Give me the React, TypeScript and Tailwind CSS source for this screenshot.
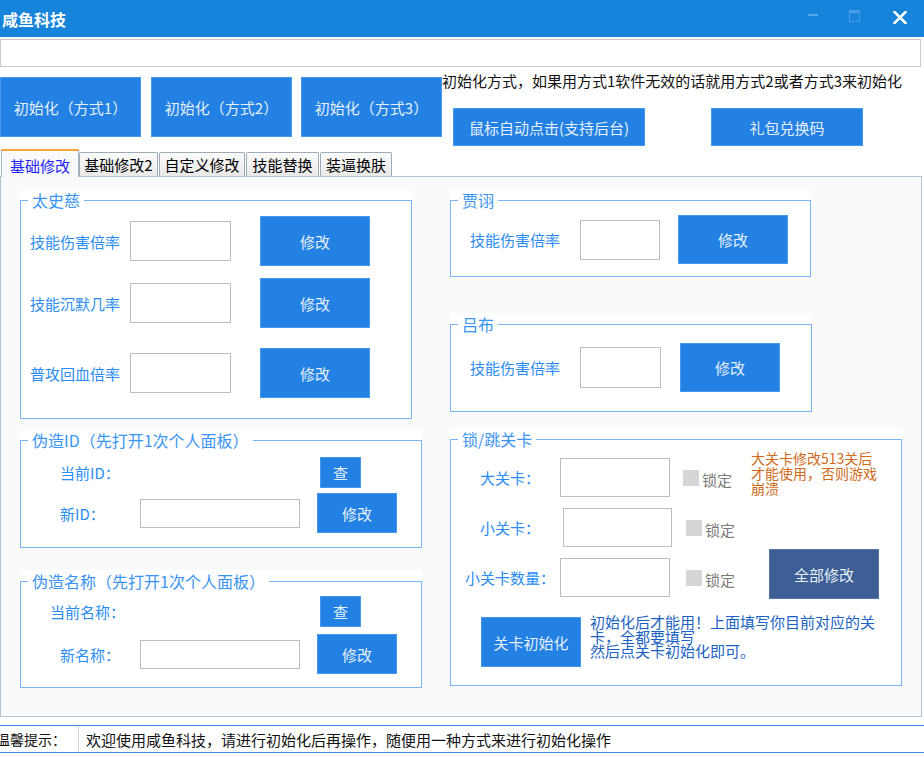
import React from "react";

const Btn = ({ className = "", children }: { className?: string; children: React.ReactNode }) => (
  <div
    className={`flex shrink-0 items-center justify-center border border-[#4399ee] bg-[#2381e3] text-[15px] leading-none text-[#e6effb] ${className}`}
  >
    {children}
  </div>
);

const Input = ({ className = "" }: { className?: string }) => (
  <div className={`shrink-0 border border-[#bdbdbd] bg-white ${className}`} />
);

const Group = ({
  title,
  className = "",
  boxClass = "",
  children,
}: {
  title: string;
  className?: string;
  boxClass?: string;
  children?: React.ReactNode;
}) => (
  <div className={`relative bg-white pt-[11px] ${className}`}>
    <div className={`border border-[#7ab4f8] ${boxClass}`}>{children}</div>
    <div className="absolute left-[8px] top-0 whitespace-nowrap bg-white px-[4px] text-[16px] leading-[22px] text-[#3a94f3]">
      {title}
    </div>
  </div>
);

const Lbl = ({ className = "", children }: { className?: string; children: React.ReactNode }) => (
  <div className={`shrink-0 whitespace-nowrap text-[15px] leading-none text-[#2a8cf4] ${className}`}>{children}</div>
);

const Lock = ({ className = "" }: { className?: string }) => (
  <div className={`flex items-center ${className}`}>
    <div className="h-[16px] w-[16px] bg-[#d6d6d6]" />
    <div className="ml-[3px] mt-[4px] text-[15px] leading-none text-[#7a7a7a]">锁定</div>
  </div>
);

export default function App() {
  return (
    <div className="flex h-[757px] w-[924px] flex-col overflow-hidden bg-white font-['Noto_Sans_CJK_SC','Noto_Sans',sans-serif] text-black">
      {/* title bar */}
      <div className="flex h-[37px] shrink-0 items-center bg-[#1784dc]">
        <div className="ml-[2px] text-[16px] font-bold leading-none text-white">咸鱼科技</div>
        <div className="ml-auto flex items-center">
          <div className="mr-[31px] mt-[-8px] h-[2px] w-[10px] bg-[#5aa6ea]" />
          <div className="mr-[33px] mt-[-6px] h-[12px] w-[11px] border border-t-[3px] border-[#4d9ce6]" />
          <svg width="14" height="13" viewBox="0 0 14 13" className="mr-[17px] mt-[-2px]">
            <path d="M1.5 1 L12.5 12 M12.5 1 L1.5 12" stroke="white" strokeWidth="2.6" strokeLinecap="square" />
          </svg>
        </div>
      </div>

      {/* address input */}
      <div className="mt-[2px] h-[28px] w-[921px] shrink-0 border border-[#cbcbcb] bg-white" />

      {/* top buttons */}
      <div className="flex h-[81px] shrink-0">
        <div className="flex pt-[10px]">
          <Btn className="h-[60px] w-[141px]">初始化（方式1）</Btn>
          <Btn className="ml-[10px] h-[60px] w-[141px]">初始化（方式2）</Btn>
          <Btn className="ml-[9px] h-[60px] w-[141px]">初始化（方式3）</Btn>
        </div>
        <div className="flex flex-col">
          <div className="mt-[4px] whitespace-nowrap text-[15px] leading-[20px] text-[#111]">
            初始化方式，如果用方式1软件无效的话就用方式2或者方式3来初始化
          </div>
          <div className="mt-[17px] flex">
            <Btn className="ml-[11px] h-[38px] w-[192px]">鼠标自动点击(支持后台)</Btn>
            <Btn className="ml-[66px] h-[38px] w-[152px]">礼包兑换码</Btn>
          </div>
        </div>
      </div>

      {/* tabs */}
      <div className="relative z-10 flex h-[28px] shrink-0 items-end pl-[1px]">
        <div className="-mb-px flex h-[28px] w-[78px] items-center justify-center border-x border-t-2 border-x-[#a9b6c4] border-t-[#f3a43a] bg-[#f9fafc] pt-[2px] text-[15px] leading-none text-[#2323f5]">
          基础修改
        </div>
        <div className="flex h-[24px] w-[79px] items-center justify-center rounded-t-[2px] border border-b-0 border-[#9eacba] bg-gradient-to-b from-[#fbfbfb] to-[#e9e9e9] text-[15px] leading-none">
          基础修改2
        </div>
        <div className="ml-px flex h-[24px] w-[86px] items-center justify-center rounded-t-[2px] border border-b-0 border-[#9eacba] bg-gradient-to-b from-[#fbfbfb] to-[#e9e9e9] text-[15px] leading-none">
          自定义修改
        </div>
        <div className="ml-px flex h-[24px] w-[73px] items-center justify-center rounded-t-[2px] border border-b-0 border-[#9eacba] bg-gradient-to-b from-[#fbfbfb] to-[#e9e9e9] text-[15px] leading-none">
          技能替换
        </div>
        <div className="ml-px flex h-[24px] w-[72px] items-center justify-center rounded-t-[2px] border border-b-0 border-[#9eacba] bg-gradient-to-b from-[#fbfbfb] to-[#e9e9e9] text-[15px] leading-none">
          装逼换肤
        </div>
      </div>

      {/* tab panel */}
      <div className="flex h-[541px] w-[922px] shrink-0 border border-[#b5c3d1] bg-[#f9fafc] pt-[12px]">
        {/* left column */}
        <div className="ml-[19px] flex w-[402px] flex-col">
          <Group title="太史慈" className="w-[392px]" boxClass="h-[219px] pt-[15px]">
            <div className="flex h-[50px] items-center">
              <Lbl className="w-[109px] pl-[9px]">技能伤害倍率</Lbl>
              <Input className="h-[40px] w-[101px]" />
              <Btn className="ml-[29px] h-[50px] w-[110px]">修改</Btn>
            </div>
            <div className="mt-[12px] flex h-[50px] items-center">
              <Lbl className="w-[109px] pl-[9px]">技能沉默几率</Lbl>
              <Input className="h-[40px] w-[101px]" />
              <Btn className="ml-[29px] h-[50px] w-[110px]">修改</Btn>
            </div>
            <div className="mt-[20px] flex h-[50px] items-center">
              <Lbl className="w-[109px] pl-[9px]">普攻回血倍率</Lbl>
              <Input className="h-[40px] w-[101px]" />
              <Btn className="ml-[29px] h-[50px] w-[110px]">修改</Btn>
            </div>
          </Group>

          <Group title="伪造ID（先打开1次个人面板）" className="mt-[10px] w-[402px]" boxClass="h-[108px] pt-[16px]">
            <div className="flex h-[31px] items-center">
              <Lbl className="w-[299px] pl-[39px]">当前ID：</Lbl>
              <Btn className="h-[31px] w-[41px]">查</Btn>
            </div>
            <div className="mt-[5px] flex h-[40px] items-center">
              <Lbl className="w-[119px] pl-[39px]">新ID：</Lbl>
              <Input className="h-[29px] w-[160px]" />
              <Btn className="ml-[17px] h-[40px] w-[80px]">修改</Btn>
            </div>
          </Group>

          <Group title="伪造名称（先打开1次个人面板）" className="mt-[22px] w-[402px]" boxClass="h-[107px] pt-[14px]">
            <div className="flex h-[31px] items-center">
              <Lbl className="w-[299px] pl-[29px]">当前名称：</Lbl>
              <Btn className="h-[31px] w-[41px]">查</Btn>
            </div>
            <div className="mt-[7px] flex h-[40px] items-center">
              <Lbl className="w-[119px] pl-[39px]">新名称：</Lbl>
              <Input className="h-[29px] w-[160px]" />
              <Btn className="ml-[17px] h-[40px] w-[80px]">修改</Btn>
            </div>
          </Group>
        </div>

        {/* right column */}
        <div className="ml-[28px] flex flex-col">
          <Group title="贾诩" className="w-[361px]" boxClass="h-[77px] pt-[14px]">
            <div className="flex h-[49px] items-center">
              <Lbl className="w-[129px] pl-[19px]">技能伤害倍率</Lbl>
              <Input className="h-[40px] w-[80px]" />
              <Btn className="ml-[18px] h-[49px] w-[110px]">修改</Btn>
            </div>
          </Group>

          <Group title="吕布" className="mt-[36px] w-[362px]" boxClass="h-[88px] pt-[18px]">
            <div className="flex h-[49px] items-center">
              <Lbl className="w-[129px] pl-[19px]">技能伤害倍率</Lbl>
              <Input className="h-[41px] w-[81px]" />
              <Btn className="ml-[19px] h-[49px] w-[100px]">修改</Btn>
            </div>
          </Group>

          <Group title="锁/跳关卡" className="mt-[16px] w-[452px]" boxClass="h-[247px]">
            <div className="flex">
              <div className="flex w-[300px] flex-col pt-[18px]">
                <div className="flex h-[39px] items-center">
                  <Lbl className="w-[109px] pl-[29px]">大关卡：</Lbl>
                  <Input className="h-[39px] w-[110px]" />
                  <Lock className="ml-[13px]" />
                </div>
                <div className="mt-[11px] flex h-[39px] items-center">
                  <Lbl className="w-[112px] pl-[29px]">小关卡：</Lbl>
                  <Input className="h-[39px] w-[109px]" />
                  <Lock className="ml-[14px]" />
                </div>
                <div className="mt-[11px] flex h-[39px] items-center">
                  <Lbl className="w-[109px] pl-[14px]">小关卡数量：</Lbl>
                  <Input className="h-[39px] w-[110px]" />
                  <Lock className="ml-[16px]" />
                </div>
              </div>
              <div className="flex flex-col pt-[11px]">
                <div className="text-[14px] leading-[15px] text-[#d06a1a]">
                  <div className="whitespace-nowrap">大关卡修改513关后</div>
                  <div className="whitespace-nowrap">才能使用，否则游戏</div>
                  <div className="whitespace-nowrap">崩溃</div>
                </div>
                <div className="ml-[18px] mt-[53px] flex h-[50px] w-[110px] items-center justify-center border border-[#5676a6] bg-[#3d5f95] text-[15px] leading-none text-[#e8eef8]">
                  全部修改
                </div>
              </div>
            </div>
            <div className="mt-[18px] flex items-start pl-[30px]">
              <Btn className="h-[50px] w-[100px]">关卡初始化</Btn>
              <div className="ml-[9px] mt-[-2px] text-[15px] leading-[14.5px] text-[#1b62c4]">
                <div className="whitespace-nowrap">初始化后才能用！上面填写你目前对应的关</div>
                <div className="whitespace-nowrap">卡，全都要填写</div>
                <div className="whitespace-nowrap">然后点关卡初始化即可。</div>
              </div>
            </div>
          </Group>
        </div>
      </div>

      {/* status bar */}
      <div className="mt-[8px] flex h-[28px] w-[924px] shrink-0 items-center border-y border-[#3a8de0] bg-white">
        <div className="ml-[-4px] w-[82px] whitespace-nowrap text-[14px] leading-none text-[#111]">温馨提示：</div>
        <div className="h-full w-px bg-[#d0d0d0]" />
        <div className="ml-[7px] whitespace-nowrap text-[15px] leading-none text-[#111]">
          欢迎使用咸鱼科技，请进行初始化后再操作，随便用一种方式来进行初始化操作
        </div>
      </div>
    </div>
  );
}
